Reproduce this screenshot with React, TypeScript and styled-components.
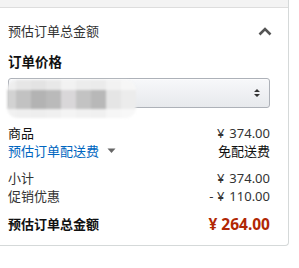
import React from "react";
import styled, { createGlobalStyle } from "styled-components";

const GlobalStyle = createGlobalStyle`
  body {
    margin: 0;
    background: #fff;
    font-family: "Noto Sans", "Noto Sans CJK SC", sans-serif;
    font-size: 13px;
    color: #111;
  }
`;

const mosaic = [
  ["#eeeeee", "#e6e6e6", "#e3e3e3", "#e8e8e8", "#f2f2f2", "#ececec", "#ebebeb", "#f2f2f2", "#f6f6f6"],
  ["#d2d2d2", "#c2c2c2", "#b3b3b3", "#bababa", "#d9d7d9", "#c3c3c3", "#b8b8b8", "#e5e5e5", "#ececec"],
  ["#f1f1f1", "#efefef", "#eeeeee", "#f0f0f0", "#f4f4f4", "#f1f1f1", "#f0f0f0", "#f6f6f6", "#f8f8f8"],
];

const App: React.FC = () => {
  return (
    <>
      <GlobalStyle />
      <Card>
        <TopStrip />
        <Body>
          <Header>
            <HeaderTitle>预估订单总金额</HeaderTitle>
            <Chevron width="14" height="9" viewBox="0 0 14 9">
              <path
                d="M1.5 7.5 L7 2 L12.5 7.5"
                fill="none"
                stroke="#555"
                strokeWidth="2.6"
              />
            </Chevron>
          </Header>
          <SectionTitle>订单价格</SectionTitle>
          <SelectBox>
            <Mosaic>
              {mosaic.map((row, r) =>
                row.map((c, i) => (
                  <Cell key={`${r}-${i}`} style={{ background: c }} />
                )),
              )}
            </Mosaic>
            <Spinner width="8" height="10" viewBox="0 0 8 10">
              <path d="M1 4 L4 1 L7 4 Z M1 6 L4 9 L7 6 Z" fill="#333" />
            </Spinner>
          </SelectBox>
          <Group $top={16}>
            <Row>
              <span>商品</span>
              <Price>
                <Yen>¥</Yen>374.00
              </Price>
            </Row>
            <Row>
              <LinkText>
                预估订单配送费
                <Caret width="9" height="6" viewBox="0 0 9 6">
                  <path d="M0.5 0.5 L8.5 0.5 L4.5 5 Z" fill="#666" />
                </Caret>
              </LinkText>
              <span>免配送费</span>
            </Row>
          </Group>
          <Group $top={9}>
            <Row>
              <Muted>小计</Muted>
              <Price>
                <Yen>¥</Yen>374.00
              </Price>
            </Row>
            <Row>
              <Muted>促销优惠</Muted>
              <Price>
                - <Yen>¥</Yen>110.00
              </Price>
            </Row>
          </Group>
          <TotalRow>
            <TotalLabel>预估订单总金额</TotalLabel>
            <TotalPrice>¥ 264.00</TotalPrice>
          </TotalRow>
        </Body>
      </Card>
    </>
  );
};

export default App;

const Card = styled.div`
  margin-left: -12px;
  width: 301px;
  box-sizing: border-box;
  border: 1px solid #d5d9d9;
  border-top: none;
  border-radius: 0 0 4px 4px;
`;

const TopStrip = styled.div`
  height: 7px;
  background: #f3f3f3;
  border-bottom: 1px solid #dddddd;
`;

const Body = styled.div`
  padding: 13px 18px 11px 19px;
`;

const Header = styled.div`
  display: flex;
  align-items: center;
  justify-content: space-between;
  height: 20px;
`;

const HeaderTitle = styled.span`
  font-size: 13px;
  line-height: 20px;
  color: #333;
`;

const Chevron = styled.svg`
  margin-right: -2px;
  display: block;
`;

const SectionTitle = styled.div`
  margin-top: 11px;
  font-size: 13.5px;
  line-height: 20px;
  font-weight: 700;
  color: #111;
`;

const SelectBox = styled.div`
  position: relative;
  margin-top: 6px;
  height: 30px;
  box-sizing: border-box;
  border: 1px solid #adb1b8;
  border-radius: 3px;
  background: linear-gradient(#f7f8fa, #e7e9ec);
  box-shadow: 0 1px 0 rgba(255, 255, 255, 0.6) inset;
  display: flex;
  align-items: center;
  justify-content: flex-end;
  padding-right: 8px;
`;

const Mosaic = styled.div`
  position: absolute;
  left: -2px;
  top: 1px;
  display: grid;
  grid-template-columns: 9px repeat(8, 15px);
  grid-template-rows: 10px 19px 9px;
  filter: blur(1.2px);
  border-radius: 10px;
  overflow: hidden;
`;

const Cell = styled.div``;

const Spinner = styled.svg`
  display: block;
`;

const Group = styled.div<{ $top: number }>`
  margin-top: ${(p) => p.$top}px;
`;

const Row = styled.div`
  display: flex;
  justify-content: space-between;
  align-items: center;
  line-height: 18px;
  font-size: 13px;
  color: #111;
`;

const Muted = styled.span`
  color: #333;
`;

const Price = styled.span`
  color: #333;
`;

const Yen = styled.span`
  margin-right: 5px;
`;

const LinkText = styled.span`
  color: #0066c0;
  display: inline-flex;
  align-items: center;
`;

const Caret = styled.svg`
  margin-left: 8px;
  display: block;
`;

const TotalRow = styled.div`
  margin-top: 9px;
  display: flex;
  justify-content: space-between;
  align-items: center;
  line-height: 20px;
`;

const TotalLabel = styled.span`
  font-weight: 700;
  font-size: 13px;
  color: #111;
`;

const TotalPrice = styled.span`
  font-weight: 700;
  font-size: 15.5px;
  color: #b12704;
`;
